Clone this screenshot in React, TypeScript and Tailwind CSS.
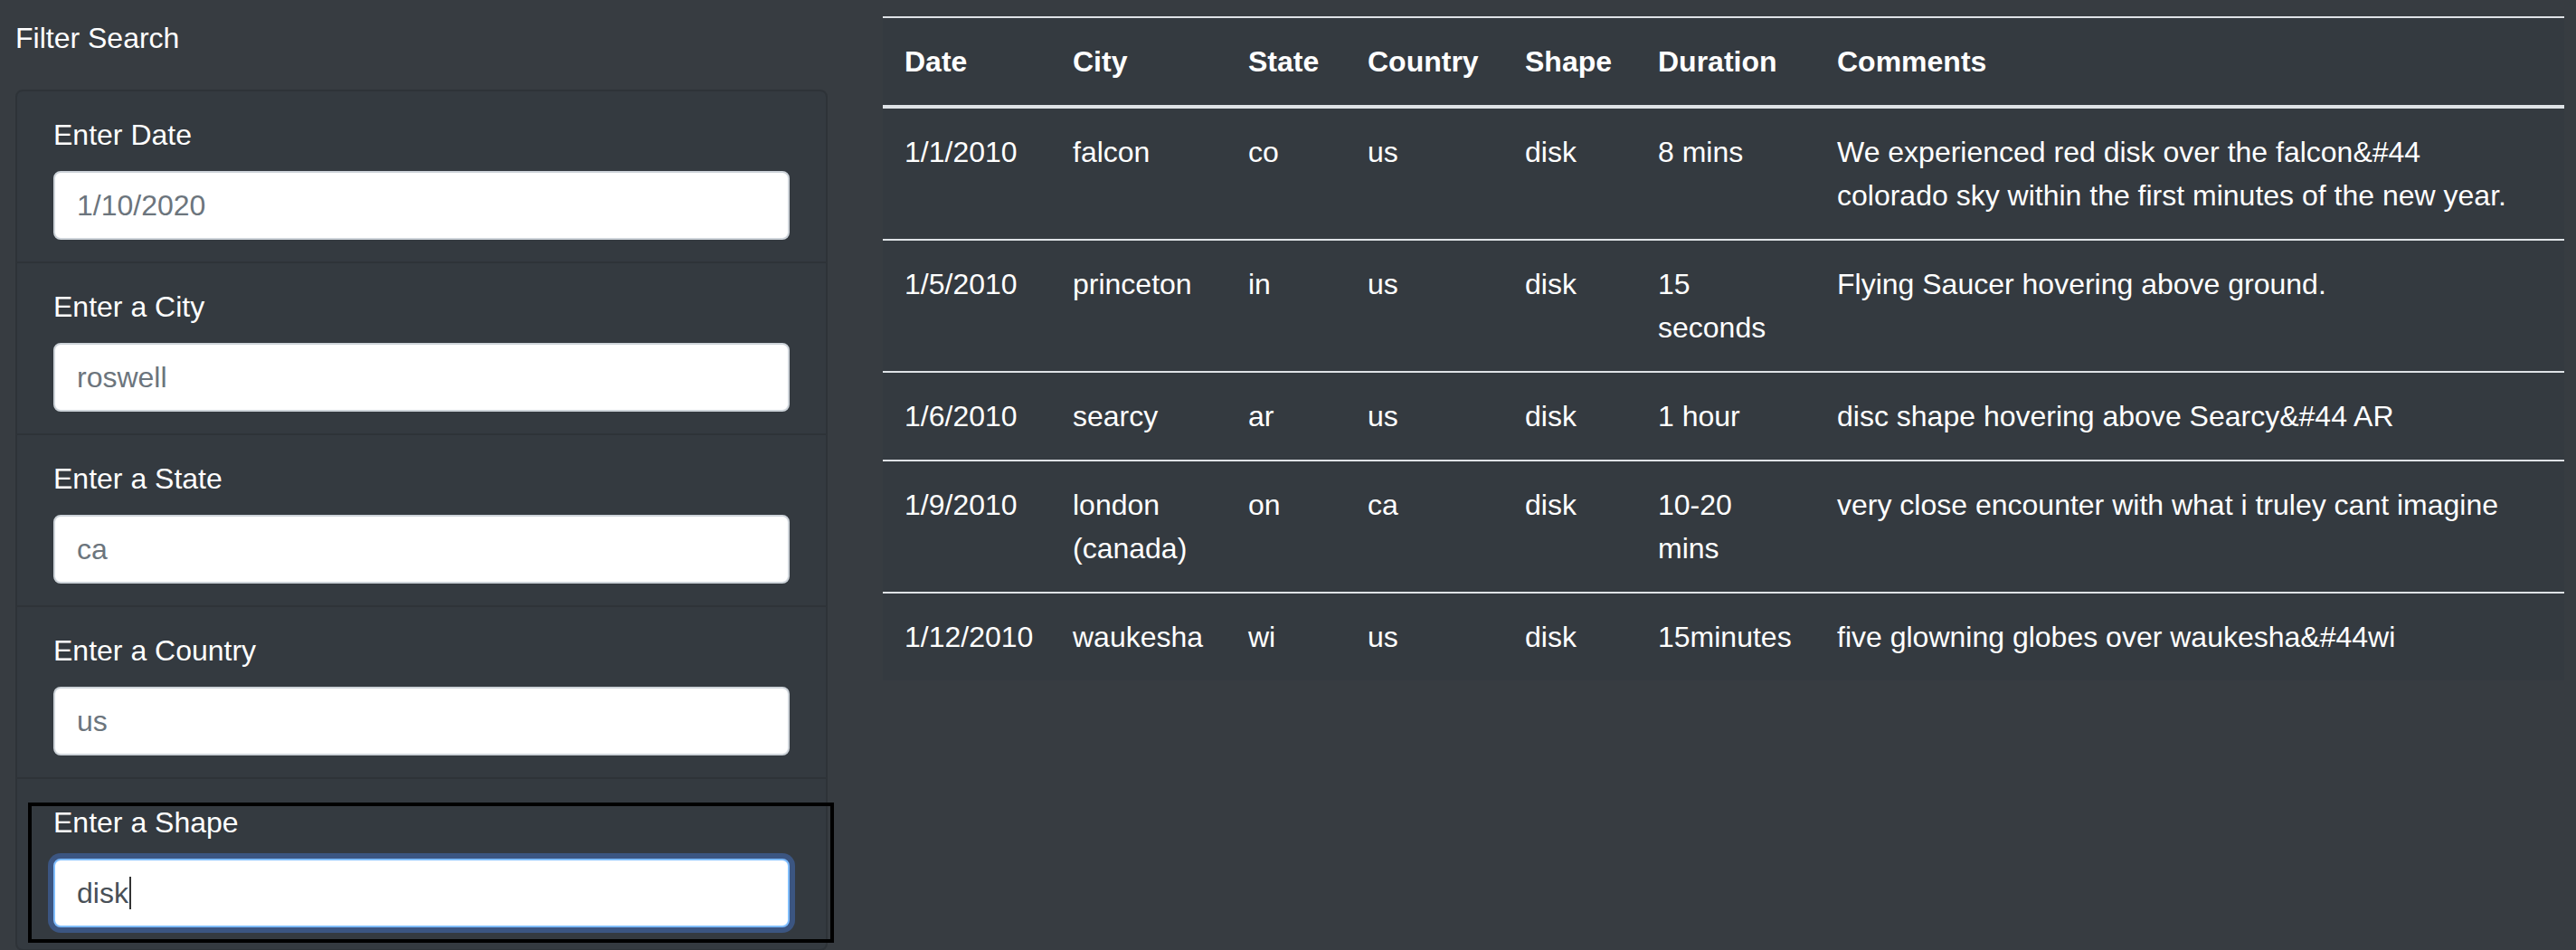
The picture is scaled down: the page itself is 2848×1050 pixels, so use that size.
import React from 'react';

type Sighting = {
  date: string;
  city: string;
  state: string;
  country: string;
  shape: string;
  duration: string;
  comments: string;
};

const sightings: Sighting[] = [
  {
    date: '1/1/2010',
    city: 'falcon',
    state: 'co',
    country: 'us',
    shape: 'disk',
    duration: '8 mins',
    comments: 'We experienced red disk over the falcon&#44 colorado sky within the first minutes of the new year.',
  },
  { date: '1/5/2010', city: 'princeton', state: 'in', country: 'us', shape: 'disk', duration: '15 seconds', comments: 'Flying Saucer hovering above ground.' },
  { date: '1/6/2010', city: 'searcy', state: 'ar', country: 'us', shape: 'disk', duration: '1 hour', comments: 'disc shape hovering above Searcy&#44 AR' },
  { date: '1/9/2010', city: 'london (canada)', state: 'on', country: 'ca', shape: 'disk', duration: '10-20 mins', comments: 'very close encounter with what i truley cant imagine' },
  { date: '1/12/2010', city: 'waukesha', state: 'wi', country: 'us', shape: 'disk', duration: '15minutes', comments: 'five glowning globes over waukesha&#44wi' },
];

const columns = [
  { label: 'Date', width: 'w-[186px]' },
  { label: 'City', width: 'w-[194px]' },
  { label: 'State', width: 'w-[132px]' },
  { label: 'Country', width: 'w-[174px]' },
  { label: 'Shape', width: 'w-[147px]' },
  { label: 'Duration', width: 'w-[198px]' },
  { label: 'Comments', width: 'w-[828px]' },
];

const filters = [
  { id: 'datetime', label: 'Enter Date', placeholder: '1/10/2020' },
  { id: 'city', label: 'Enter a City', placeholder: 'roswell' },
  { id: 'state', label: 'Enter a State', placeholder: 'ca' },
  { id: 'country', label: 'Enter a Country', placeholder: 'us' },
];

function FilterItem({ id, label, placeholder }: { id: string; label: string; placeholder: string }) {
  return (
    <li className="border-b-2 border-[#2e3338] px-[40px] py-[24px]">
      <label htmlFor={id} className="block text-[32px] leading-[48px] mb-[16px]">
        {label}
      </label>
      <input
        id={id}
        type="text"
        readOnly
        placeholder={placeholder}
        className="block w-full h-[76px] px-[24px] bg-white border-2 border-[#ced4da] rounded-lg text-[32px] text-[#495057] placeholder:text-[#6c757d] outline-none"
      />
    </li>
  );
}

export default function App() {
  return (
    <div className="min-h-screen bg-[#373c41] text-white font-['Liberation_Sans',Arial,sans-serif] flex items-start">
      {/* filter column */}
      <aside className="w-[976px] shrink-0 pl-[17px] pt-[18px]">
        <h5 className="text-[32px] leading-[48px] mb-[33px]">Filter Search</h5>
        <ul className="w-[898px] bg-[#343a40] border-2 border-[#2e3338] rounded-lg">
          {filters.map((f) => (
            <FilterItem key={f.id} {...f} />
          ))}
          <li className="relative px-[40px] py-[24px]">
            <label htmlFor="shape" className="block text-[32px] leading-[48px] mb-[16px]">
              Enter a Shape
            </label>
            <div className="relative">
              <input
                id="shape"
                type="text"
                readOnly
                defaultValue="disk"
                className="block w-full h-[76px] px-[24px] bg-white border-2 border-[#80bdff] rounded-lg text-[32px] text-[#495057] outline-none shadow-[0_0_0_6px_#3b5581]"
              />
              <div className="absolute inset-0 pl-[26px] flex items-center pointer-events-none text-[32px]">
                <span className="invisible">disk</span>
                <span className="w-[2px] h-[36px] ml-[1px] bg-[#333]" />
              </div>
            </div>
            <div className="absolute left-[12px] top-[26px] w-[891px] h-[155px] border-[4px] border-black pointer-events-none" />
          </li>
        </ul>
      </aside>

      {/* results table */}
      <main className="pt-[18px]">
        <table className="table-fixed border-collapse w-[1859px] bg-[#343a40] text-[32px] leading-[48px]">
          <colgroup>
            {columns.map((c) => (
              <col key={c.label} className={c.width} />
            ))}
          </colgroup>
          <thead>
            <tr>
              {columns.map((c) => (
                <th key={c.label} className="text-left font-bold align-bottom px-[24px] py-[24px] border-t-2 border-b-4 border-[#dee2e6]">
                  {c.label}
                </th>
              ))}
            </tr>
          </thead>
          <tbody>
            {sightings.map((s) => (
              <tr key={s.date}>
                {[s.date, s.city, s.state, s.country, s.shape, s.duration].map((v, i) => (
                  <td key={i} className="align-top px-[24px] py-[24px] border-t-2 border-[#dee2e6]">
                    {v}
                  </td>
                ))}
                <td className="align-top pl-[24px] pr-[60px] py-[24px] border-t-2 border-[#dee2e6]">{s.comments}</td>
              </tr>
            ))}
          </tbody>
        </table>
      </main>
    </div>
  );
}
